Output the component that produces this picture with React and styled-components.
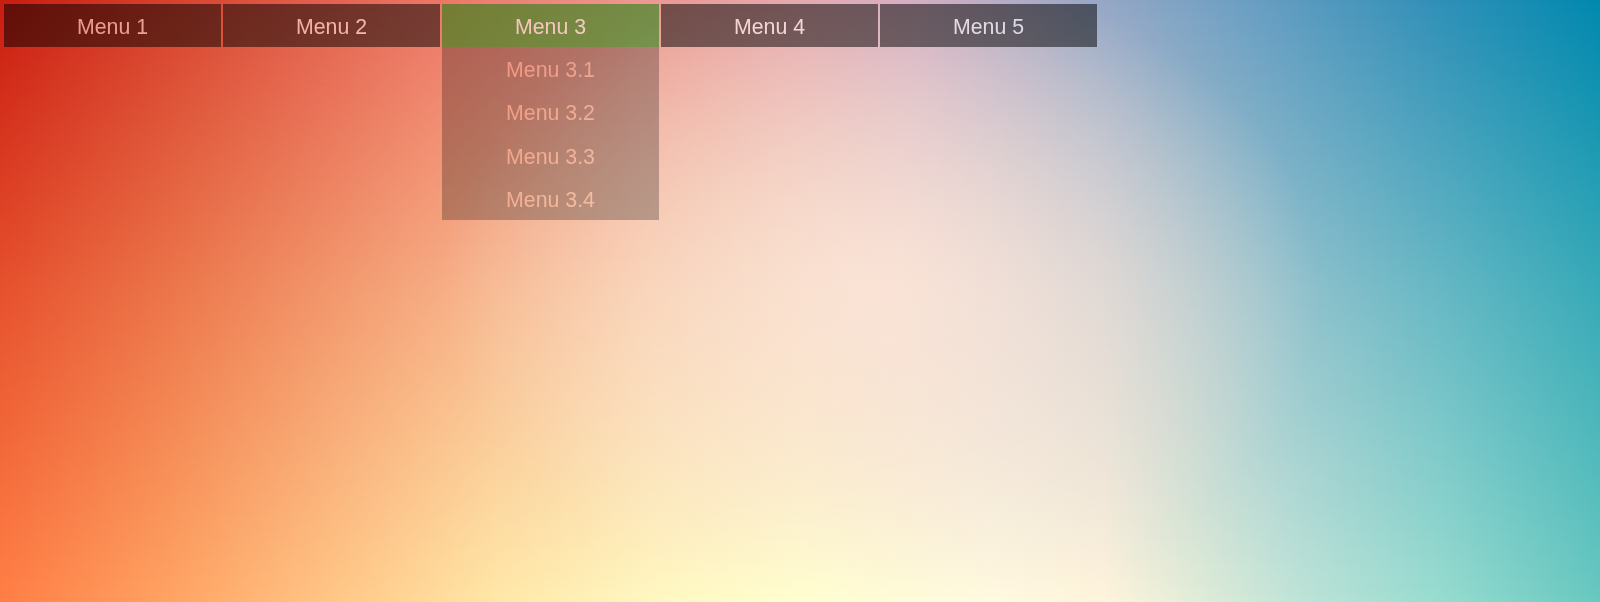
import styled, { createGlobalStyle, css } from 'styled-components';

const GlobalStyle = createGlobalStyle`
    html,
    body {
        margin: 0;
        padding: 0;
        height: 100%;
    }
    #root {
        min-height: 100%;
    }
`;

// warm-to-cool backdrop: the bottom row sits on the page, the top row fades in over it
const Page = styled.div`
    position: relative;
    min-height: 100vh;
    overflow: hidden;
    font-family: 'Liberation Sans', Arial, sans-serif;
    background: linear-gradient(
        to right,
        #ff7f46 0%,
        #ffa262 10%,
        #ffc888 21%,
        #ffe8a8 31%,
        #fff8c2 41%,
        #ffffd0 50%,
        #fffae0 62%,
        #fff4dc 69%,
        #e0ecd8 75%,
        #c0e4d8 81%,
        #98dcd0 90%,
        #68c8c0 100%
    );

    &::before {
        content: '';
        position: absolute;
        inset: 0;
        background: linear-gradient(
            to right,
            #c91c11 0%,
            #d84632 12%,
            #ec7565 27%,
            #eb9890 40%,
            #e2a5ac 50%,
            #d0aac0 57%,
            #9aa8c6 68%,
            #6a9ec2 78%,
            #3490b8 89%,
            #0088ae 100%
        );
        -webkit-mask-image: linear-gradient(to bottom, #000 0%, rgba(0, 0, 0, 0.47) 48%, transparent 100%);
        mask-image: linear-gradient(to bottom, #000 0%, rgba(0, 0, 0, 0.47) 48%, transparent 100%);
    }

    &::after {
        content: '';
        position: absolute;
        inset: 0;
        background: radial-gradient(
            ellipse 440px 320px at 55% 48%,
            rgba(255, 232, 218, 0.75),
            rgba(255, 232, 218, 0)
        );
    }
`;

const Nav = styled.nav`
    position: relative;
    z-index: 1;
    padding: 4px;
`;

const MenuList = styled.ul`
    display: flex;
    gap: 2px;
    margin: 0;
    padding: 0;
    list-style: none;
`;

const MenuItem = styled.li`
    position: relative;
    box-sizing: border-box;
    width: 217px;
    height: 43px;
    padding-top: 3px;
    line-height: 40px;
    text-align: center;
    font-size: 21.3px;
    color: #fff;
    background: #000;
    opacity: 0.5;
    cursor: pointer;

    ${(props) =>
        props.$active &&
        css`
            background: #008000;
        `}
`;

const SubMenu = styled.ul`
    position: absolute;
    top: 100%;
    left: 0;
    width: 100%;
    margin: 0;
    padding: 0;
    list-style: none;
`;

const SubItem = styled.li`
    box-sizing: border-box;
    height: 43.25px;
    padding-top: 3px;
    line-height: 40px;
    color: #f0b49c;
    background: #000;
    opacity: 0.5;
`;

const menus = [
    { label: 'Menu 1' },
    { label: 'Menu 2' },
    { label: 'Menu 3', children: ['Menu 3.1', 'Menu 3.2', 'Menu 3.3', 'Menu 3.4'], open: true },
    { label: 'Menu 4' },
    { label: 'Menu 5' },
];

function App() {
    return (
        <Page>
            <GlobalStyle />
            <Nav>
                <MenuList>
                    {menus.map((menu) => (
                        <MenuItem key={menu.label} $active={menu.open}>
                            {menu.label}
                            {menu.open && (
                                <SubMenu>
                                    {menu.children.map((sub) => (
                                        <SubItem key={sub}>{sub}</SubItem>
                                    ))}
                                </SubMenu>
                            )}
                        </MenuItem>
                    ))}
                </MenuList>
            </Nav>
        </Page>
    );
}

export default App;
